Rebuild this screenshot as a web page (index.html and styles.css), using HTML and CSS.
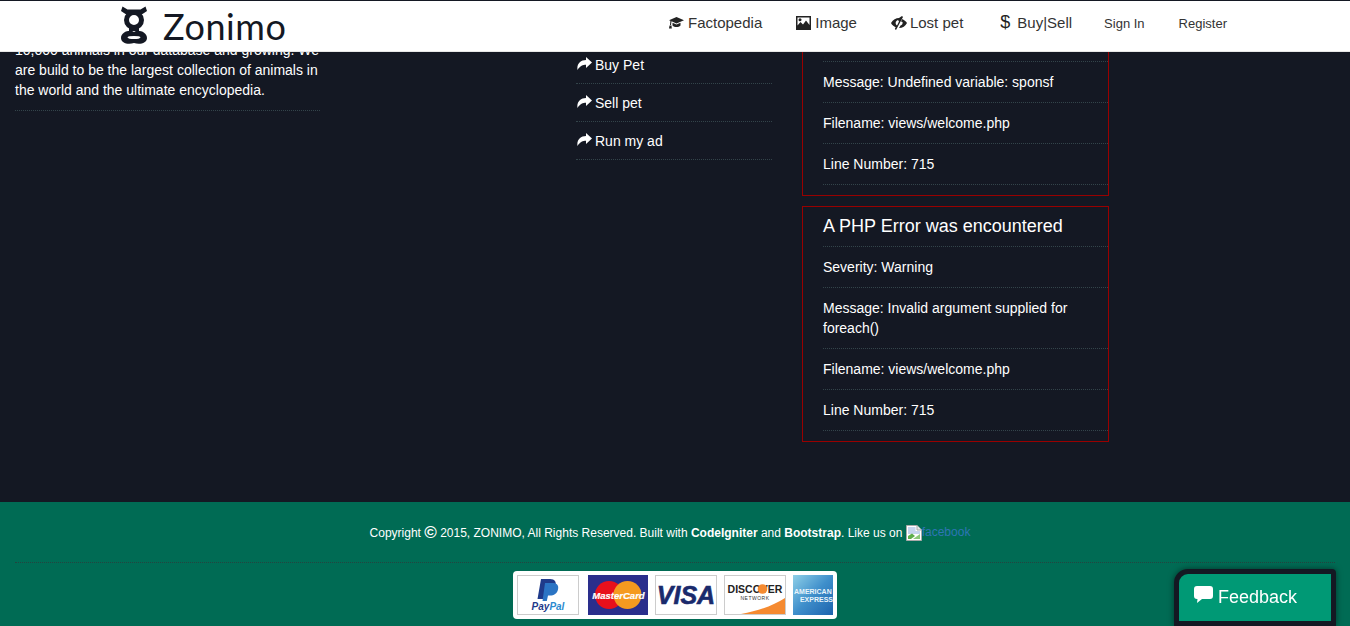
FILE: index.html
```html
<!DOCTYPE html>
<html>

<head>
    <meta charset="utf-8">
    <title>Zonimo</title>
    <link rel="stylesheet" href="styles.css">
</head>

<body>
    <header class="navbar">
        <a class="brand" href="#">
            <svg class="brand-mark" width="28" height="40" viewBox="0 0 28 40">
                <path d="M2.500 0.500 L7.500 3.500 L20.500 3.500 L25.500 0.500 L27 5 L22.500 8 L5.500 8 L1 5 Z" fill="#141823"></path>
                <ellipse cx="14" cy="14" rx="7.500" ry="7.500" fill="none" stroke="#141823" stroke-width="5"></ellipse>
                <path d="M9 21 L19 21 L19 25 L9 25 Z" fill="#141823"></path>
                <path d="M14 26 C18 23 27 26 27 32 C27 37 20 39 14 37 C8 39 1 37 1 32 C1 26 10 23 14 26 Z" fill="#141823"></path>
                <ellipse cx="14" cy="31.500" rx="6.500" ry="1.600" fill="#fff"></ellipse>
            </svg>
            <span class="brand-name">Zonimo</span>
        </a>
        <nav class="nav-links">
            <a href="#">
                <svg class="nav-icon" width="16" height="14" viewBox="0 0 16 14">
                    <path d="M8.500 1 L16 4.200 L8.500 7.400 L3.500 5.300 L3 9 L2 9 L2.400 4.800 L1 4.200 Z" fill="#222"></path>
                    <path d="M4.500 6.700 L8.500 8.500 L12.500 6.700 L12.500 9.500 C10.500 11.500 6.500 11.500 4.500 9.500 Z" fill="#222"></path>
                    <path d="M1.500 9.500 L3.500 9.500 L3.800 12.500 L1 12.500 Z" fill="#222"></path>
                </svg>Factopedia</a>
            <a href="#">
                <svg class="nav-icon" width="15" height="14" viewBox="0 0 15 14">
                    <path fill-rule="evenodd" d="M0 0 H15 V14 H0 Z M1.500 1.500 V9.500 L4.500 6 L7 8.500 L10 4.500 L13.500 9 V1.500 Z" fill="#222"></path>
                    <circle cx="4" cy="3.800" r="1.500" fill="#222"></circle>
                </svg>Image</a>
            <a href="#">
                <svg class="nav-icon nav-icon-eye" width="16" height="15" viewBox="0 0 16 15">
                    <path fill-rule="evenodd" d="M0 7 C2 3.500 5 2 8 2 L11 0 L12 1 L5 14 L3.800 13 L4.700 11.300 C2.800 10.500 1 9 0 7 Z M7 4 C5 4.500 4 6.500 5 8.500 L6 9.500 L8 5.500 Z" fill="#222"></path>
                    <path d="M11 3 C13 3.800 15 5.300 16 7 C14.500 10 11.500 12 8 12 L9.500 9.500 C11 9 12 7.500 11.500 6 L10 5.500 Z" fill="#222"></path>
                </svg>Lost pet</a>
            <a class="nav-buy" href="#"><span class="dollar">$</span>Buy|Sell</a>
            <a class="nav-small" href="#">Sign In</a>
            <a class="nav-small" href="#">Register</a>
        </nav>
    </header>

    <section class="main">
        <div class="col-about">
            <p>10,000 animals in our database and growing. We are build to be the largest collection of animals in the world and the ultimate encyclopedia.</p>
        </div>
        <ul class="col-links">
            <li><svg class="share" width="15" height="13" viewBox="0 0 15 13"><path d="M9 0 L15 5.500 L9 11 L9 7.800 C6 7.800 3 9 0.500 13 C-0.500 7 3.500 3 9 3 Z" fill="#fff"></path></svg>Buy Pet</li>
            <li><svg class="share" width="15" height="13" viewBox="0 0 15 13"><path d="M9 0 L15 5.500 L9 11 L9 7.800 C6 7.800 3 9 0.500 13 C-0.500 7 3.500 3 9 3 Z" fill="#fff"></path></svg>Sell pet</li>
            <li><svg class="share" width="15" height="13" viewBox="0 0 15 13"><path d="M9 0 L15 5.500 L9 11 L9 7.800 C6 7.800 3 9 0.500 13 C-0.500 7 3.500 3 9 3 Z" fill="#fff"></path></svg>Run my ad</li>
        </ul>
        <div class="col-errors">
            <div class="php-error php-error-first">
                <p>Message: Undefined variable: sponsf</p>
                <p>Filename: views/welcome.php</p>
                <p>Line Number: 715</p>
            </div>
            <div class="php-error">
                <h4>A PHP Error was encountered</h4>
                <p>Severity: Warning</p>
                <p>Message: Invalid argument supplied for foreach()</p>
                <p>Filename: views/welcome.php</p>
                <p>Line Number: 715</p>
            </div>
        </div>
    </section>

    <footer class="footer">
        <div class="copyright">
            Copyright <span class="copy-mark">&copy;</span> 2015, ZONIMO, All Rights Reserved. Built with <b>CodeIgniter</b> and <b>Bootstrap</b>. Like us on
            <a class="fb" href="#">
                <svg class="broken" width="16" height="16" viewBox="0 0 16 16">
                    <path d="M0.500 0.500 H11 L15.500 5 V15.500 H0.500 Z" fill="#fff" stroke="#a8a8a8"></path>
                    <path d="M11 0.500 V5 H15.500" fill="#e8e8e8" stroke="#a8a8a8"></path>
                    <path d="M2 2 H9.500 V6 H14 V9 L2 9 Z" fill="#c6d4ee"></path>
                    <path d="M2 14 L2 11 L6 8.500 L9 11 L5 14 Z" fill="#5fae4c"></path>
                    <path d="M7 14 L14 9 V14 Z" fill="#8cc77b"></path>
                </svg>facebook</a>
        </div>
        <div class="cards">
            <svg class="card" width="62" height="40" viewBox="0 0 62 40">
                <rect x="0.500" y="0.500" width="61" height="39" fill="#fff" stroke="#ccc"></rect>
                <path d="M24 4 H33 C38 4 39.500 7 38.500 11 C37.500 15 34.500 17 30.500 17 H28 L26.500 24 H20.500 Z" fill="#1f3a8a"></path>
                <path d="M28 8 H35.500 C40 8 42 10.500 41 14.500 C40 18.500 37 20.500 33 20.500 H31 L29.800 26 H25.500 Z" fill="#2b74c4"></path>
                <text x="31" y="35" class="card-paypal"><tspan fill="#1f3a8a">Pay</tspan><tspan fill="#2b8ad0">Pal</tspan></text>
            </svg>
            <svg class="card card-mastercard" width="60" height="40" viewBox="0 0 60 40">
                <rect width="60" height="40" fill="#2a2e8c"></rect>
                <circle cx="21" cy="20" r="14" fill="#e8101c"></circle>
                <circle cx="39.500" cy="20" r="14" fill="#f59a1f"></circle>
                <text x="30.500" y="24" class="card-mc">MasterCard</text>
            </svg>
            <svg class="card" width="62" height="40" viewBox="0 0 62 40">
                <rect x="0.500" y="0.500" width="61" height="39" fill="#fff" stroke="#ccc"></rect>
                <text x="31" y="29" class="card-visa">VISA</text>
            </svg>
            <svg class="card" width="62" height="40" viewBox="0 0 62 40">
                <rect x="0.500" y="0.500" width="61" height="39" fill="#fff" stroke="#ccc"></rect>
                <path d="M17 39 C35 36 50 30 61 23 V39 Z" fill="#f58a30"></path>
                <text x="31" y="18" class="card-discover">DISCOVER</text>
                <circle cx="38.500" cy="14" r="4.800" fill="#f58a30"></circle>
                <text x="31" y="25" class="card-network">NETWORK</text>
            </svg>
            <svg class="card" width="40" height="40" viewBox="0 0 40 40">
                <defs>
                    <linearGradient id="amexbg" x1="0" y1="0" x2="1" y2="1">
                        <stop offset="0" stop-color="#8fd0e8"></stop>
                        <stop offset="0.500" stop-color="#3f8fcb"></stop>
                        <stop offset="1" stop-color="#1d63ad"></stop>
                    </linearGradient>
                </defs>
                <rect width="40" height="40" fill="url(#amexbg)"></rect>
                <text x="1" y="19" class="card-amex">AMERICAN</text>
                <text x="40" y="27" class="card-amex card-amex-end">EXPRESS</text>
            </svg>
        </div>
    </footer>

    <div class="feedback">
        <svg class="feedback-icon" width="19" height="18" viewBox="0 0 19 18">
            <path d="M3 0 H16 C18 0 19 1 19 3 V10 C19 12 18 13 16 13 H8 L3 17 L3.500 13 H3 C1 13 0 12 0 10 V3 C0 1 1 0 3 0 Z" fill="#fff"></path>
        </svg>Feedback
    </div>
</body>

</html>
```

FILE: styles.css
```css
* {
    box-sizing: border-box;
}

html,
body {
    margin: 0;
    height: 626px;
    overflow: hidden;
}

body {
    font-family: "Liberation Sans", Arial, sans-serif;
    font-size: 14px;
    line-height: 20px;
    color: #fff;
    background: #141823;
}

a {
    text-decoration: none;
}

.navbar {
    position: fixed;
    top: 0;
    left: 0;
    right: 0;
    z-index: 10;
    height: 52px;
    display: flex;
    align-items: center;
    justify-content: space-between;
    padding: 0 123px 0 120px;
    background: #fff;
    border-top: 1px solid #141823;
    border-bottom: 1px solid #e7e7e7;
}

.brand {
    display: flex;
    align-items: center;
    gap: 15px;
    color: #141823;
}

.brand-name {
    font-family: Lato, sans-serif;
    font-size: 36px;
    line-height: 40px;
    letter-spacing: 0.6px;
}

.nav-links {
    display: flex;
    align-items: center;
    gap: 34px;
    margin-bottom: 6px;
}

.nav-links a {
    display: flex;
    align-items: center;
    color: #333;
    font-size: 15px;
}

.nav-links .nav-small {
    font-size: 13px;
    padding-top: 1px;
}

.nav-links .nav-buy {
    margin: 0 -2px 0 3px;
}

.nav-icon {
    margin-right: 4px;
}

.nav-icon-eye {
    margin-right: 3px;
}

.dollar {
    font-size: 18px;
    color: #222;
    margin-right: 7px;
    margin-top: -3px;
}

/* the page is scrolled, the tops of the columns sit under the navbar */
.main {
    height: 502px;
    overflow: hidden;
    display: flex;
    align-items: flex-start;
    padding-left: 15px;
}

.col-about {
    width: 305px;
    padding-top: 40px;
}

.col-about p {
    margin: 0;
    padding-bottom: 10px;
    border-bottom: 1px dotted #33444a;
}

.col-links {
    width: 196px;
    margin: 0 0 0 256px;
    padding: 46px 0 0;
    list-style: none;
}

.col-links li {
    height: 38px;
    padding-top: 9px;
    border-bottom: 1px dotted #33444a;
}

.share {
    margin: 0 3px 0 1px;
}

.col-errors {
    width: 307px;
    margin-left: 30px;
}

.php-error {
    margin-bottom: 10px;
    padding: 0 0 10px 20px;
    border: 1px solid #990000;
}

.php-error-first {
    padding-top: 60px;
}

.php-error-first p:first-child {
    border-top: 1px dotted #33444a;
}

.php-error h4 {
    margin: 0;
    padding: 9px 0 10px;
    font-size: 18px;
    font-weight: normal;
    line-height: 20px;
    border-bottom: 1px dotted #33444a;
}

.php-error p {
    margin: 0;
    padding: 10px 0;
    border-bottom: 1px dotted #33444a;
}

.footer {
    height: 124px;
    padding: 0 15px;
    background: #006b54;
}

.copyright {
    height: 61px;
    padding: 21px 10px 0 0;
    font-size: 12px;
    text-align: center;
    border-bottom: 1px dotted #24433f;
}

.copy-mark {
    font-size: 17px;
    font-weight: bold;
    line-height: 16px;
    vertical-align: -1px;
}

.fb {
    color: #2f75b5;
    position: relative;
    top: -1px;
}

.broken {
    vertical-align: -5px;
}

.cards {
    display: flex;
    align-items: center;
    gap: 7px;
    width: 324px;
    height: 48px;
    margin: 8px auto 0;
    padding: 0 4px;
    background: #fff;
    border-radius: 4px;
}

.card-mastercard {
    margin-left: 2px;
}

.card-paypal {
    font: italic bold 10px "Liberation Sans", sans-serif;
    text-anchor: middle;
}

.card-mc {
    font: italic bold 9.500px "Liberation Sans", sans-serif;
    fill: #fff;
    stroke: #fff;
    stroke-width: 0.2px;
    text-anchor: middle;
}

.card-visa {
    font: italic bold 25px "Liberation Sans", sans-serif;
    fill: #1a2a6c;
    stroke: #1a2a6c;
    stroke-width: 0.6px;
    text-anchor: middle;
}

.card-discover {
    font: bold 10.500px "Liberation Sans", sans-serif;
    fill: #222;
    text-anchor: middle;
}

.card-network {
    font: 5px "Liberation Sans", sans-serif;
    fill: #333;
    text-anchor: middle;
    letter-spacing: 0.5px;
}

.card-amex {
    font: bold 7px "Liberation Sans", sans-serif;
    fill: #e8f4fb;
}

.card-amex-end {
    text-anchor: end;
}

.feedback {
    position: fixed;
    right: 14px;
    bottom: 0;
    z-index: 20;
    width: 162px;
    height: 57px;
    display: flex;
    align-items: flex-start;
    padding: 13px 0 0 15px;
    font-size: 18px;
    color: #fff;
    background: #009975;
    border: 5px solid #141823;
    border-radius: 14px 4px 0 0;
    box-shadow: 0 0 6px rgba(0, 0, 0, 0.5);
}

.feedback-icon {
    margin: -1px 5px 0 0;
}
```
